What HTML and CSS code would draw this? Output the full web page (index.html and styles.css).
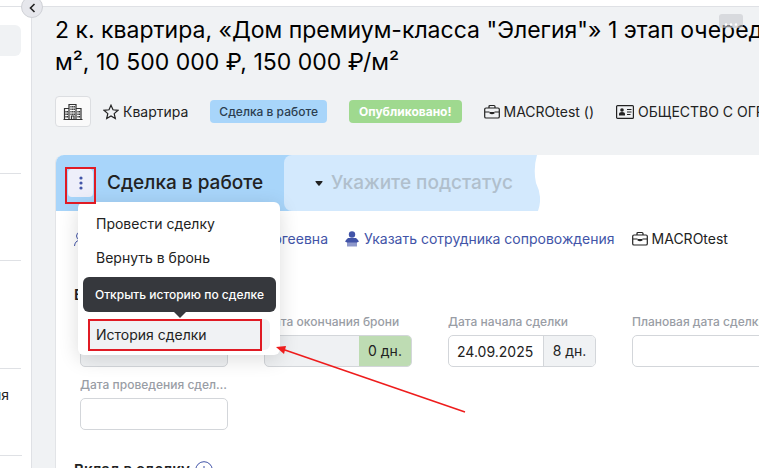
FILE: index.html
```html
<!DOCTYPE html>
<html lang="ru">
<head>
<meta charset="utf-8">
<title>Сделка в работе</title>
<link rel="stylesheet" href="styles.css">
</head>
<body>
<svg class="defs" aria-hidden="true">
  <symbol id="briefcase" viewBox="0 0 16 16">
    <path d="M5 4V2.5Q5 1.5 6 1.5h4q1 0 1 1V4M2 4h12q1.3 0 1.3 1.3V12.700q0 1.300-1.300 1.300H2Q.7 14 .7 12.700V5.300Q.7 4 2 4ZM.7 8H5.500M10.500 8h4.800" fill="none" stroke="currentColor" stroke-width="1.200"/>
    <path d="M5.500 8h5v1.500q-2.500 1.500-5 0Z" fill="currentColor"/>
  </symbol>
</svg>
<div class="app">
  <div class="topbar"></div>
  <div class="body">
    <nav class="sidebar">
      <div class="side-active"></div>
      <div class="side-group side-first"></div>
      <div class="side-group side-second"></div>
      <div class="side-group side-third"></div>
      <div class="side-group side-text">ия</div>
      <button class="collapse" aria-label="Свернуть"><svg viewBox="0 0 22 22" width="22" height="22"><path d="M12.500 7 8.500 11l4 4" fill="none" stroke="#222" stroke-width="1.600"/></svg></button>
    </nav>
    <main class="main">
      <h1 class="title">2 к. квартира, «Дом премиум-класса "Элегия"» 1 этап очереди<br>м², 10 500 000 ₽, 150 000 ₽/м²</h1>
      <button class="more" aria-label="Ещё"><svg viewBox="0 0 14 3" width="14" height="3" fill="#fff"><circle cx="2" cy="1.500" r="1.200"/><circle cx="7" cy="1.500" r="1.200"/><circle cx="12" cy="1.500" r="1.200"/></svg></button>
      <div class="meta">
        <button class="house" aria-label="Дом">
          <svg viewBox="0 0 20 18" width="20" height="18" fill="none" stroke="#333" stroke-width="1.200"><path d="M6 16.500V1.500h7v15M6 5.500H1.500v11M13 5.500h5v11M.5 16.500h19M8.500 16V13h2.500v3"/><path d="M8 3v9M9.700 3v9M11.300 3v9M3 8v7M4.500 8v7M15 8v7M16.500 8v7" stroke-dasharray="1.500 1"/></svg>
        </button>
        <span class="item"><svg viewBox="0 0 16 16" width="16" height="16"><path d="m8 1.200 2 4.600 5 .5-3.800 3.300 1.100 4.900L8 11.900l-4.300 2.600 1.100-4.900L1 6.300l5-.5Z" fill="none" stroke="#222" stroke-width="1.200"/></svg>Квартира</span>
        <span class="badge badge-blue">Сделка в работе</span>
        <span class="badge badge-green">Опубликовано!</span>
        <span class="item"><svg width="16" height="16"><use href="#briefcase"/></svg>MACROtest ()</span>
        <span class="item"><svg viewBox="0 0 18 16" width="18" height="16"><rect x=".6" y="1.600" width="16.800" height="12.800" rx="1" fill="none" stroke="#222" stroke-width="1.200"/><circle cx="6" cy="6" r="1.800" fill="#222"/><path d="M3 11.500V10q0-2 3-2t3 2v1.500ZM11 5h4.500v1H11zM11 7.500h4.500v1H11zM11 10h3.500v1H11z" fill="#222"/></svg>ОБЩЕСТВО С ОГРАНИЧЕННОЙ</span>
      </div>

      <section class="card">
        <header class="status">
          <div class="stage">
            <button class="dots" aria-label="Меню сделки"><svg viewBox="0 0 4 14" width="4" height="14" fill="#4254a8"><circle cx="2" cy="2" r="1.600"/><circle cx="2" cy="7" r="1.600"/><circle cx="2" cy="12" r="1.600"/></svg></button>
            <h2 class="stage-name">Сделка в работе</h2>
            <div class="menu">
              <button class="menu-item">Провести сделку</button>
              <button class="menu-item">Вернуть в бронь</button>
              <button class="menu-item menu-active">История сделки</button>
              <div class="tooltip" role="tooltip">Открыть историю по сделке</div>
            </div>
          </div>
          <div class="substage">
            <svg class="caret" viewBox="0 0 8 5" width="8" height="5"><path d="M1 0h6q1 0 .4.900L4.600 4.400q-.6.600-1.200 0L.6.900Q0 0 1 0Z" fill="#222"/></svg>
            <select class="substage-select" aria-label="Подстатус"><option>Укажите подстатус</option></select>
          </div>
          <svg class="wave" viewBox="0 0 6 56" width="6" height="56"><path d="M0 0h3Q-1 14 2 28 9 42 4 56H0Z" fill="#d3e9fd"/></svg>
        </header>

        <div class="people">
          <a class="person person-first" href="#"><svg viewBox="0 0 16 16" width="16" height="16" fill="none" stroke="currentColor"><circle cx="6" cy="5" r="3.500"/><path d="M.5 15Q1 10 5 9.500"/></svg>Сергеевна</a>
          <a class="person" href="#"><svg viewBox="0 0 14 16" width="14" height="16" fill="currentColor"><circle cx="7" cy="3.500" r="3.200"/><path d="M0 10.500q1-2 3-3.500h8q2 1.500 3 3.500l-2 1H2Z"/><path d="M2 11h10v4.500H2z" opacity=".6"/></svg>Указать сотрудника сопровождения</a>
          <span class="item"><svg width="16" height="16"><use href="#briefcase"/></svg>MACROtest</span>
        </div>

        <h3 class="section">В</h3>
        <div class="fields">
          <div class="field"><span class="label"></span><input class="control muted" aria-label="Дата брони" disabled></div>
          <div class="field"><label class="label" for="end">Дата окончания брони</label><div class="group muted"><input class="control" id="end" disabled><span class="days days-green">0 дн.</span></div></div>
          <div class="field"><label class="label" for="start">Дата начала сделки</label><div class="group"><input class="control" id="start" value="24.09.2025"><span class="days">8 дн.</span></div></div>
          <div class="field"><label class="label" for="plan">Плановая дата сделки</label><input class="control" id="plan"></div>
          <div class="field"><label class="label" for="done">Дата проведения сделки</label><input class="control" id="done"></div>
        </div>
        <h3 class="section">Вклад в сделку <svg viewBox="0 0 18 18" width="18" height="18" fill="none" stroke="#4254a8"><circle cx="9" cy="9" r="8.300"/><path d="M9 5v8M5 9h8"/></svg></h3>
      </section>
    </main>
  </div>
  <div class="mark mark-dots"></div>
  <div class="mark mark-item"></div>
  <svg class="arrow" viewBox="0 0 190 68" width="190" height="68"><path d="M6 3 189 66" stroke="#ee1c1c" stroke-width="1.500"/><path d="M0 1 10 0 8 8Z" fill="#ee1c1c"/></svg>
</div>
</body>
</html>
```

FILE: styles.css
```css
* { box-sizing: border-box; }
body { margin: 0; font: 14px/20px Inter, "Liberation Sans", sans-serif; color: #222; }
button, input, select { font: inherit; color: inherit; }
button { border: 0; padding: 0; cursor: pointer; }
svg { flex: none; }
.defs { display: none; }
.app { position: relative; height: 100vh; overflow: hidden; display: flex; flex-direction: column; background: #fff; }
.topbar { height: 7px; flex: none; border-bottom: 1px solid #dfe1e5; }
.body { flex: 1; display: flex; min-height: 0; }

.sidebar { position: relative; z-index: 2; flex: none; width: 32px; padding: 18px 10px 0 0; border-right: 1px solid #dfe1e5; display: flex; flex-direction: column; }
.side-active { height: 31px; background: #f0f2f4; border-radius: 0 6px 6px 0; }
.side-group { border-bottom: 1px solid #dfe1e5; }
.side-first { height: 118px; }
.side-second { height: 87px; }
.side-third { height: 108px; }
.side-text { height: 87px; padding-top: 16px; width: 22px; text-indent: -7px; }
.collapse { position: absolute; top: -11px; right: -12px; width: 22px; height: 22px; border-radius: 50%; background: #e6e7ec; border: 1px solid #cfd1d6; display: grid; place-items: center; }

.main { position: relative; flex: 1; min-width: 0; padding: 7px 0 0 23px; background: #f0f2f4; display: flex; flex-direction: column; }
.title { margin: 0; font-size: 23px; line-height: 32px; font-weight: 400; color: #000; white-space: nowrap; }
.more { position: absolute; top: 7px; right: 16px; width: 24px; height: 14px; padding-top: 7px; border-radius: 3px; background: rgba(200, 202, 206, .6); display: grid; place-items: center; }
.meta { display: flex; align-items: center; gap: 22px; margin-top: 18px; white-space: nowrap; }
.house { width: 36px; height: 31px; margin-right: -10px; background: #fafafa; border: 1px solid #dcdee1; border-radius: 4px; display: grid; place-items: center; flex: none; }
.item, .person { display: flex; align-items: center; gap: 4px; }
.badge { height: 23px; line-height: 23px; padding: 0 9px; border-radius: 4px; font-size: 12px; font-weight: 500; }
.badge-blue { background: #a8d5fa; color: #2c3e50; }
.badge-green { padding: 0 10px; background: #9fd98f; color: #fff; font-weight: 700; }

.card { flex: 1; margin-top: 28px; background: #fff; border-left: 1px solid #e2e4e7; border-top-left-radius: 8px; }
.status { display: flex; height: 56px; }
.stage { position: relative; display: flex; align-items: center; gap: 14px; width: 236px; padding-left: 12px; background: #a8d5fa; border-top-left-radius: 8px; }
.dots { width: 25px; height: 28px; border-radius: 4px; background: #eeeffa; display: grid; place-items: center; }
.stage-name { margin: 0; font-size: 19px; font-weight: 500; white-space: nowrap; }
.substage { position: relative; z-index: 1; display: flex; align-items: center; gap: 8px; width: 250px; margin-left: -8px; padding-left: 31px; background: #d3e9fd; border-radius: 8px 0 0 8px; }
.substage-select { appearance: none; border: 0; background: none; padding: 0; font-size: 19px; font-weight: 500; color: #b0bfcc; }
.menu { position: absolute; z-index: 3; top: 47px; left: 22px; width: 202px; padding: 6px 10px 5px; background: #fff; border-radius: 6px; box-shadow: 0 4px 20px rgba(0, 0, 0, .14); display: flex; flex-direction: column; gap: 3px; }
.menu-item { height: 31px; padding-left: 8px; text-align: left; background: none; border-radius: 6px; }
.menu-active { margin-top: 43px; background: #f0f2f4; }
.tooltip { position: absolute; top: 75px; left: 5px; right: 4px; height: 35px; line-height: 36px; border-radius: 6px; background: #36383d; color: #fff; font-size: 12px; font-weight: 500; text-align: center; white-space: nowrap; }
.tooltip::after { content: ""; position: absolute; top: 100%; left: 50%; margin-left: -6px; border: 6px solid transparent; border-top-color: #36383d; border-bottom: 0; }

.people { display: flex; align-items: center; gap: 17px; padding: 18px 0 0 18px; white-space: nowrap; }
.person { color: #4254a8; text-decoration: none; gap: 5px; }
.person-first { width: 254px; justify-content: space-between; }
.section { display: flex; align-items: center; gap: 5px; margin: 0; padding-left: 18px; font-size: 15px; line-height: 20px; font-weight: 600; }
.people + .section { margin-top: 36px; }
.fields { display: grid; grid-template-columns: repeat(4, 148px); gap: 9px 36px; padding: 8px 0 30px 24px; }
.label { display: block; height: 22px; line-height: 18px; font-size: 12px; font-weight: 500; color: #999da5; overflow: hidden; text-overflow: ellipsis; white-space: nowrap; }
.control, .group { width: 100%; height: 32px; border: 1px solid #d3d6da; border-radius: 5px; background: #fff; padding: 0 8px; }
.control { display: block; min-width: 0; }
.group { display: flex; padding: 0; overflow: hidden; }
.group .control { flex: 1; height: 100%; border: 0; background: none; }
.control.muted, .group.muted { background: #eff1f3; }
.days { flex: none; width: 52px; line-height: 30px; text-align: center; background: #f0f2f4; border-left: 1px solid #d3d6da; }
.days-green { background: #bedcb3; border-left: 0; }

.mark { position: absolute; z-index: 5; border: 2px solid #e01b24; pointer-events: none; }
.mark-dots { left: 65px; top: 167px; width: 31px; height: 37px; }
.mark-item { left: 88px; top: 319px; width: 174px; height: 32px; }
.arrow { position: absolute; z-index: 5; left: 276px; top: 346px; pointer-events: none; }
```
